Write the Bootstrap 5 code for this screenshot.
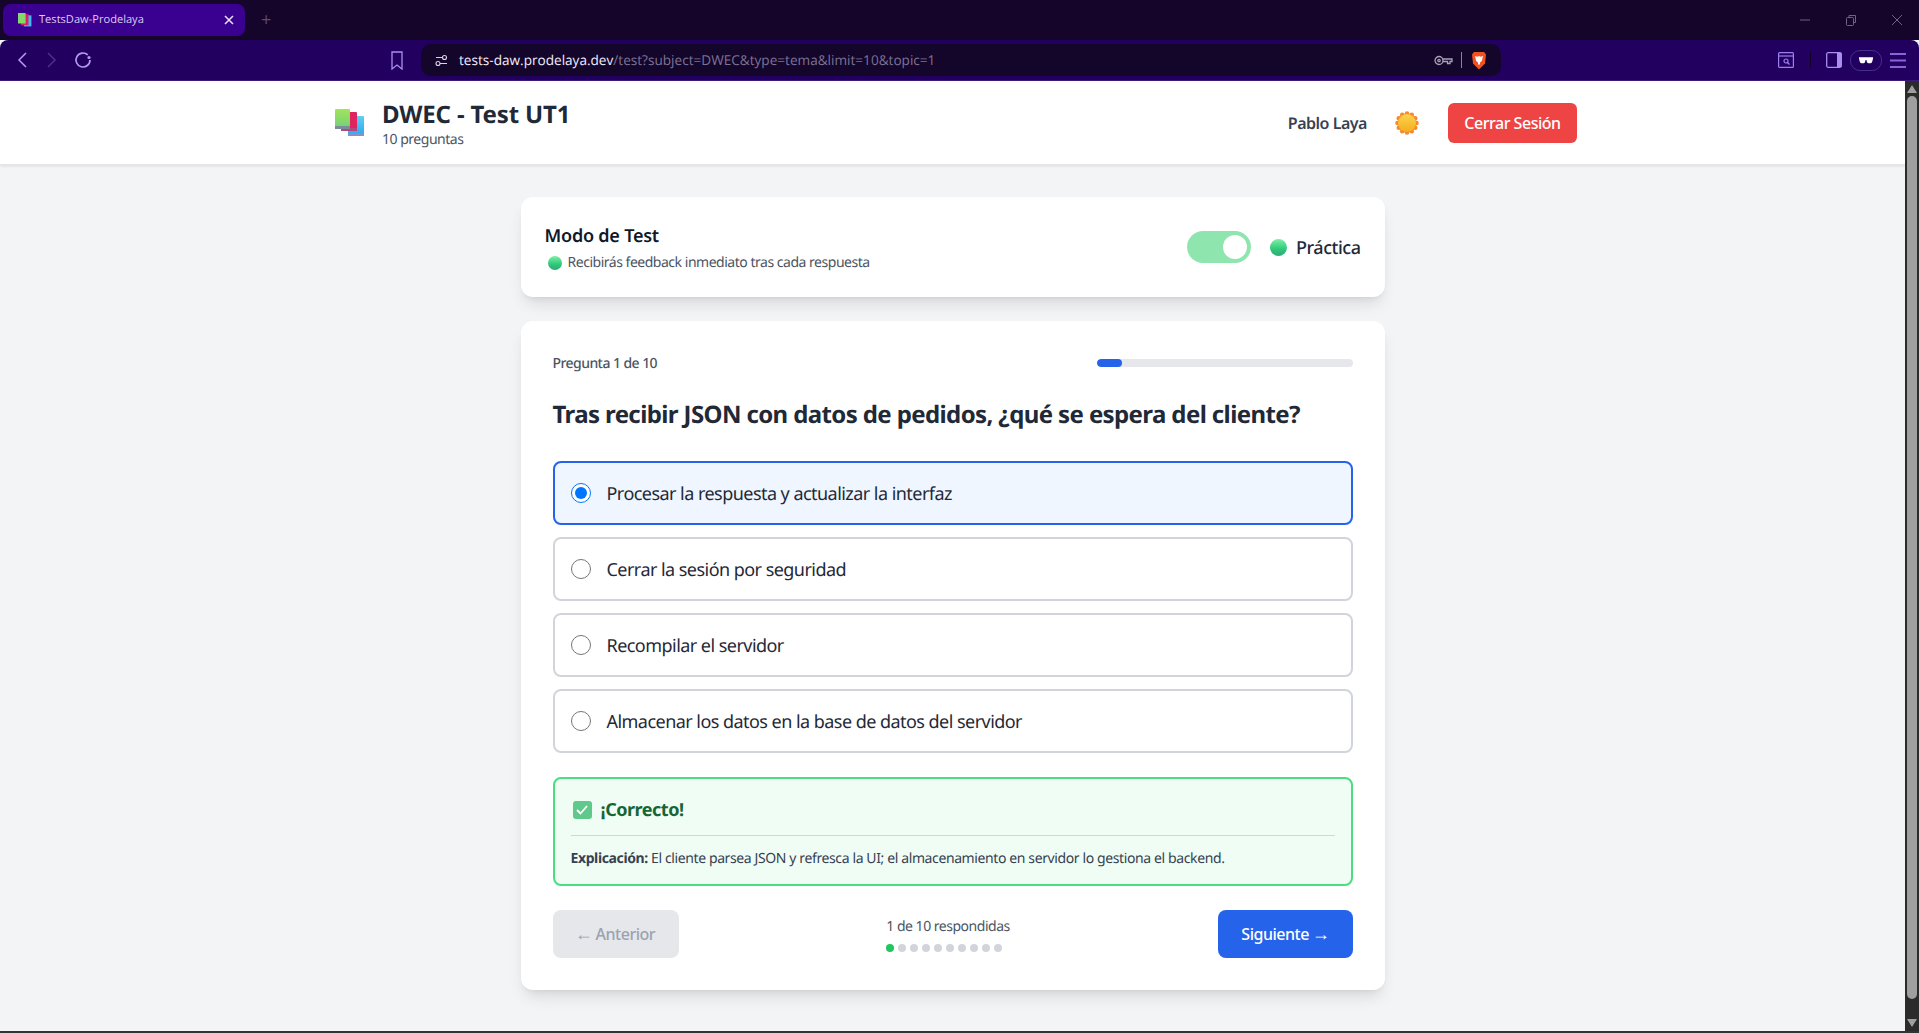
<!DOCTYPE html>
<html lang="es">
<head>
    <meta charset="UTF-8">
    <meta name="viewport" content="width=device-width, initial-scale=1">
    <title>TestsDaw-Prodelaya</title>
    <link rel="stylesheet" href="https://cdn.jsdelivr.net/npm/bootstrap@5.3.0/dist/css/bootstrap.min.css">
    <style>
        html, body { height: 100%; overflow: hidden; }
        body { background-color: #f3f4f6; color: #1f2937; font-family: "Noto Sans", "Open Sans", sans-serif; letter-spacing: -0.03em; text-rendering: geometricPrecision; }
        .app-shell { height: 1033px; }

        /* browser chrome */
        .tab-strip { height: 40px; background-color: #15052b; padding: 4px 3px 4px; font-family: "Open Sans", sans-serif; letter-spacing: 0; }
        .tab-active { width: 242px; height: 32px; background-color: #3a008f; border-radius: 8px; padding: 0 11px 0 15px; color: #d9cdf2; font-size: 11.1px; }
        .tab-fav { margin-right: 7px; }
        .tab-new { color: #5b4a78; font-size: 18px; margin-left: 16px; line-height: 1; }
        .win-btns { gap: 34px; padding-right: 13px; }
        .tool-bar { height: 41px; background-color: #220060; border-bottom: 1px solid #3d1a7a; border-radius: 8px 8px 0 0; padding: 0 13px 0 16px; letter-spacing: 0; }
        .tool-gap { margin-left: 18px; }
        .tool-gap-sm { margin-left: 16px; }
        .url-bar { width: 1080px; height: 32px; background-color: #14052b; border-radius: 10px; margin-left: 18px; padding: 0 14px; font-family: "Open Sans", sans-serif; font-size: 13.6px; }
        .url-text { margin-left: 11px; }
        .url-host { color: #f2eefa; }
        .url-rest { color: #7d7395; }
        .url-sep { width: 1px; height: 16px; background-color: #8b8299; margin: 0 9px 0 8px; }
        .nav-spacer { width: 299px; }
        .glasses-pill { width: 32px; height: 21px; border: 1px solid #43308a; border-radius: 10px; margin: 0 8px; }
        .tool-sep { width: 1px; height: 16px; background-color: #0f0325; margin: 0 15px 0 16px; }

        /* page */
        .page-area { height: 950px; }
        .page-main { flex: 1 1 auto; min-width: 0; }
        .fake-scroll { width: 14px; background-color: #2b2b2b; }
        .fake-thumb { width: 10px; background-color: #9f9f9f; border-radius: 5px; flex: 1 1 auto; margin: 3px auto 20px; }
        .site-head { height: 84px; background-color: #fff; border-bottom: 1px solid #e5e7eb; box-shadow: 0 1px 3px rgba(0,0,0,.1); padding: 0 328px 0 334px; }
        .head-title { font-size: 24px; font-weight: 700; line-height: 32px; color: #1f2937; margin: 4px 0 -1px; letter-spacing: -0.006em; }
        .head-sub { font-size: 14px; line-height: 20px; color: #4b5563; }
        .head-name { font-size: 16px; font-weight: 600; color: #374151; }
        .head-sun { margin: 0 28px 0 27px; }
        .btn-logout { height: 40px; width: 129px; background-color: #ef4444; color: #fff; border: 0; border-radius: 6px; font-size: 16px; font-weight: 500; padding: 0; letter-spacing: inherit; }
        .sheet { width: 864px; margin: 0 auto; }
        .panel-box { background-color: #fff; border: 0; border-radius: 12px; box-shadow: 0 10px 15px -3px rgba(0,0,0,.1), 0 4px 6px -4px rgba(0,0,0,.1); }
        .mode-box { height: 100px; margin-top: 32px; padding: 0 24px; }
        .mode-title { font-size: 18px; font-weight: 600; line-height: 28px; color: #111827; margin: 1px 0 1px; letter-spacing: -0.012em; }
        .mode-sub { font-size: 14px; line-height: 20px; color: #4b5563; margin-top: 3px; }
        .dot-green { width: 14px; height: 14px; border-radius: 50%; background: linear-gradient(#7ef0a8, #2fc878 60%, #30a878); margin-left: 3px; margin-right: 6px; }
        .dot-big { width: 17px; height: 17px; margin: 0 9px 0 0; }
        .mode-toggle { width: 64px; height: 32px; border-radius: 16px; background-color: #8fe5ae; padding: 4px; margin-right: 19px; }
        .mode-knob { width: 24px; height: 24px; border-radius: 50%; background-color: #fff; }
        .mode-label { font-size: 18px; font-weight: 500; color: #1f2937; padding-top: 2px; }
        .quiz-box { height: 669px; margin-top: 24px; padding: 32px; }
        .quiz-count { font-size: 14px; font-weight: 500; line-height: 22px; margin-bottom: -2px; color: #4b5563; letter-spacing: -0.04em; }
        .bar-track { width: 256px; height: 8px; background-color: #e5e7eb; border-radius: 4px; overflow: hidden; }
        .bar-fill { height: 100%; background-color: #2563eb; border-radius: 4px; }
        .quiz-q { font-size: 24px; font-weight: 700; line-height: 34px; color: #1f2937; margin: 25px 0 29px; letter-spacing: -0.0254em; }
        .opt-row { height: 64px; border: 2px solid #d1d5db; border-radius: 8px; padding: 2px 16px 0; font-size: 18px; color: #1f2937; margin-bottom: 12px; letter-spacing: -0.03em; }
        .opt-on { border-color: #2563eb; background-color: #eff6ff; }
        .opt-row input { width: 20px; height: 20px; margin: -2px 16px 0 0; }
        .fb-box { height: 109px; margin-top: 24px; border: 2px solid #4ade80; border-radius: 8px; background-color: #f0fdf4; padding: 15px 16px 0; }
        .fb-head { font-size: 18px; font-weight: 700; color: #166534; line-height: 28px; padding: 2px 0 11px; }
        .fb-check { width: 19px; height: 18px; border-radius: 3px; background-color: #5fc98c; margin: 0 9px 0 2px; }
        .fb-text { font-size: 14px; line-height: 20px; color: #374151; border-top: 1px solid #d1d5db; padding-top: 13px; letter-spacing: -0.0276em; }
        .quiz-nav { margin-top: 24px; }
        .btn-prev, .btn-next { height: 48px; border: 0; border-radius: 8px; font-size: 16px; font-weight: 500; padding: 0; letter-spacing: inherit; }
        .btn-prev { width: 126px; background-color: #e5e7eb; color: #9ca3af; }
        .btn-next { width: 135px; background-color: #2563eb; color: #fff; }
        .arrow-glyph { font-family: "Liberation Sans", sans-serif; font-size: 18px; line-height: 1; letter-spacing: 0; margin: 0 -1px; }
        .nav-mid { font-size: 14px; line-height: 20px; color: #4b5563; }
        .dot-row { gap: 4px; margin-top: 7px; }
        .dot-step { width: 8px; height: 8px; border-radius: 50%; background-color: #d1d5db; }
        .dot-now { background-color: #22c55e; }
        .screen-edge { height: 2px; background-color: #333; }
    </style>
</head>
<body>
<div class="app-shell d-flex flex-column">
    <div class="tab-strip d-flex align-items-center">
        <div class="tab-active d-flex align-items-center">
            <svg width="14" height="14" viewBox="0 0 24 24" class="tab-fav"><rect x="10" y="4" width="13" height="19" fill="#38bdf8"/><rect x="5" y="2" width="13" height="19" fill="#e11d63"/><rect x="0" y="0" width="13" height="18" fill="#84d96a"/></svg>
            <span class="flex-grow-1">TestsDaw-Prodelaya</span>
            <svg width="10" height="10" viewBox="0 0 10 10"><path d="M1 1l8 8M9 1l-8 8" stroke="#e6def5" stroke-width="1.6"/></svg>
        </div>
        <span class="tab-new">+</span>
        <div class="win-btns d-flex align-items-center ms-auto">
            <svg width="12" height="12" viewBox="0 0 12 12"><path d="M1 6h10" stroke="#6d6480" stroke-width="1"/></svg>
            <svg width="12" height="12" viewBox="0 0 12 12" fill="none" stroke="#6d6480"><rect x="1.5" y="3.5" width="7" height="8" rx="1"/><path d="M4 3V1.5h6.500v7H9"/></svg>
            <svg width="12" height="12" viewBox="0 0 12 12"><path d="M1 1l10 10M11 1L1 11" stroke="#6d6480" stroke-width="1"/></svg>
        </div>
    </div>
    <div class="tool-bar d-flex align-items-center">
        <svg width="12" height="18" viewBox="0 0 12 18" fill="none" stroke="#b39cf0" stroke-width="1.500"><path d="M10 2L3 9l7 7"/></svg>
        <svg class="tool-gap" width="12" height="18" viewBox="0 0 12 18" fill="none" stroke="#4a2f8c" stroke-width="1.500"><path d="M2 2l7 7-7 7"/></svg>
        <svg class="tool-gap-sm" width="18" height="18" viewBox="0 0 18 18" fill="none" stroke="#b39cf0" stroke-width="1.700"><path d="M16 9a7 7 0 1 1-2.200-5.100"/><circle cx="15" cy="6.500" r="1.600" fill="#b39cf0" stroke="none"/></svg>
        <div class="nav-spacer"></div>
        <svg width="12" height="19" viewBox="0 0 12 19" fill="none" stroke="#a98ff0" stroke-width="1.300"><path d="M1 1h10v17l-5-4-5 4z"/></svg>
        <div class="url-bar d-flex align-items-center">
            <svg width="13" height="13" viewBox="0 0 13 13" fill="none" stroke="#d8d2e4" stroke-width="1.100"><path d="M1 3.500h6M5 9.500h7"/><circle cx="9.500" cy="3.500" r="2"/><circle cx="3" cy="9.500" r="2"/></svg>
            <span class="url-text flex-grow-1"><span class="url-host">tests-daw.prodelaya.dev</span><span class="url-rest">/test?subject=DWEC&amp;type=tema&amp;limit=10&amp;topic=1</span></span>
            <svg width="19" height="11" viewBox="0 0 19 11" fill="none" stroke="#a7a1b3" stroke-width="1.300"><circle cx="5" cy="5.500" r="4"/><circle cx="5" cy="5.500" r="1.200"/><path d="M9 4h9v2.500h-2v2h-2.500v-2H9"/></svg>
            <div class="url-sep"></div>
            <svg width="16" height="19" viewBox="0 0 16 19"><path d="M3 1h10l2 2.500-1 9-6 6-6-6-1-9z" fill="#f4511e"/><path d="M4 5l2.500.800L8 5l1.500.800L12 5l-1.200 5L9 11.500v2H7v-2L5.200 10z" fill="#fff"/></svg>
        </div>
        <div class="d-flex align-items-center ms-auto">
            <svg width="16" height="16" viewBox="0 0 16 16" fill="none" stroke="#9d7ff0" stroke-width="1.200"><rect x=".6" y=".6" width="14.800" height="14.800" rx="1"/><path d="M1 4h14"/><circle cx="8" cy="9" r="2"/><path d="M9.500 10.500l2 2"/></svg>
            <div class="tool-sep"></div>
            <svg width="16" height="16" viewBox="0 0 16 16"><rect x=".7" y=".7" width="14.600" height="14.600" rx="1.500" fill="none" stroke="#a98ff0" stroke-width="1.300"/><rect x="11" y="1" width="4.500" height="14" fill="#a98ff0"/></svg>
            <div class="glasses-pill d-flex align-items-center justify-content-center">
                <svg width="14" height="7" viewBox="0 0 15 7"><path d="M0 0h15v1.500l-1 3.500q-.5 1.500-2 1.500h-1.500q-1.500 0-2-1.500L8 3H7l-.5 2q-.5 1.500-2 1.500H3Q1.500 6.500 1 5L0 1.500z" fill="#fff"/></svg>
            </div>
            <svg width="16" height="15" viewBox="0 0 16 15" fill="#8a63dc"><rect width="16" height="2"/><rect y="6.500" width="16" height="2"/><rect y="13" width="16" height="2"/></svg>
        </div>
    </div>

    <div class="page-area d-flex">
        <div class="page-main">
            <header class="site-head d-flex align-items-center justify-content-between">
                <div class="d-flex align-items-center">
                    <svg width="32" height="32" viewBox="0 0 32 32" class="me-3">
                        <defs>
                            <linearGradient id="bookGreen" x1="0" y1="0" x2="0" y2="1"><stop offset="0" stop-color="#a3e45a"/><stop offset="1" stop-color="#6fcf7a"/></linearGradient>
                            <linearGradient id="bookBlue" x1="0" y1="0" x2="0" y2="1"><stop offset="0" stop-color="#5fd0f5"/><stop offset="1" stop-color="#2fa4f0"/></linearGradient>
                        </defs>
                        <rect x="14" y="9" width="16" height="20" rx="1" fill="url(#bookBlue)"/><rect x="14" y="26" width="16" height="3" fill="#8a8fc9"/>
                        <rect x="7" y="5" width="16" height="19" rx="1" fill="#e0245e"/><rect x="7" y="21" width="16" height="3" fill="#b04a7e"/>
                        <rect x="1" y="2" width="15" height="20" rx="1" fill="url(#bookGreen)"/><rect x="1" y="19" width="15" height="3" fill="#7d8a9c"/>
                    </svg>
                    <div>
                        <h1 class="head-title">DWEC - Test UT1</h1>
                        <div class="head-sub">10 preguntas</div>
                    </div>
                </div>
                <div class="d-flex align-items-center">
                    <span class="head-name">Pablo Laya</span>
                    <svg class="head-sun" width="26" height="26" viewBox="0 0 26 26">
                        <defs><linearGradient id="sunFill" x1="0" y1="0" x2="0" y2="1"><stop offset="0" stop-color="#fcd34d"/><stop offset="1" stop-color="#f5ae1e"/></linearGradient></defs>
                        <g fill="#f58a2e"><circle cx="22.500" cy="13" r="2.300"/><circle cx="21.200" cy="17.750" r="2.300"/><circle cx="17.750" cy="21.200" r="2.300"/><circle cx="13" cy="22.500" r="2.300"/><circle cx="8.250" cy="21.200" r="2.300"/><circle cx="4.800" cy="17.750" r="2.300"/><circle cx="3.500" cy="13" r="2.300"/><circle cx="4.800" cy="8.250" r="2.300"/><circle cx="8.250" cy="4.800" r="2.300"/><circle cx="13" cy="3.500" r="2.300"/><circle cx="17.750" cy="4.800" r="2.300"/><circle cx="21.200" cy="8.250" r="2.300"/><circle cx="13" cy="13" r="9.500"/></g>
                        <circle cx="13" cy="13" r="9" fill="url(#sunFill)"/>
                    </svg>
                    <button class="btn btn-logout" type="button">Cerrar Sesión</button>
                </div>
            </header>

            <div class="sheet">
                <div class="card panel-box mode-box flex-row align-items-center justify-content-between">
                    <div>
                        <h2 class="mode-title">Modo de Test</h2>
                        <div class="mode-sub d-flex align-items-center"><span class="dot-green"></span>Recibirás feedback inmediato tras cada respuesta</div>
                    </div>
                    <div class="d-flex align-items-center">
                        <div class="mode-toggle d-flex justify-content-end"><div class="mode-knob"></div></div>
                        <span class="dot-green dot-big"></span>
                        <span class="mode-label">Práctica</span>
                    </div>
                </div>

                <div class="card panel-box quiz-box">
                    <div class="d-flex align-items-center justify-content-between">
                        <span class="quiz-count">Pregunta 1 de 10</span>
                        <div class="bar-track"><div class="bar-fill" style="width: 10%"></div></div>
                    </div>
                    <h3 class="quiz-q">Tras recibir JSON con datos de pedidos, ¿qué se espera del cliente?</h3>
                    <label class="opt-row opt-on d-flex align-items-center"><input type="radio" name="opt" checked>Procesar la respuesta y actualizar la interfaz</label>
                    <label class="opt-row d-flex align-items-center"><input type="radio" name="opt">Cerrar la sesión por seguridad</label>
                    <label class="opt-row d-flex align-items-center"><input type="radio" name="opt">Recompilar el servidor</label>
                    <label class="opt-row d-flex align-items-center mb-0"><input type="radio" name="opt">Almacenar los datos en la base de datos del servidor</label>

                    <div class="fb-box">
                        <div class="fb-head d-flex align-items-center">
                            <span class="fb-check d-flex align-items-center justify-content-center">
                                <svg width="12" height="10" viewBox="0 0 12 10" fill="none" stroke="#fff" stroke-width="1.800"><path d="M1 5l3.500 3.500L11 1"/></svg>
                            </span>¡Correcto!
                        </div>
                        <div class="fb-text"><strong>Explicación:</strong> El cliente parsea JSON y refresca la UI; el almacenamiento en servidor lo gestiona el backend.</div>
                    </div>

                    <div class="quiz-nav d-flex align-items-center justify-content-between">
                        <button class="btn btn-prev" type="button"><span class="arrow-glyph">←</span> Anterior</button>
                        <div class="nav-mid">
                            <div>1 de 10 respondidas</div>
                            <div class="dot-row d-flex">
                                <span class="dot-step dot-now"></span><span class="dot-step"></span><span class="dot-step"></span><span class="dot-step"></span><span class="dot-step"></span><span class="dot-step"></span><span class="dot-step"></span><span class="dot-step"></span><span class="dot-step"></span><span class="dot-step"></span>
                            </div>
                        </div>
                        <button class="btn btn-next" type="button">Siguiente <span class="arrow-glyph">→</span></button>
                    </div>
                </div>
            </div>
        </div>
        <div class="fake-scroll d-flex flex-column align-items-center">
            <svg class="mt-1" width="10" height="8" viewBox="0 0 10 8"><path d="M5 0l5 8H0z" fill="#9f9f9f"/></svg>
            <div class="fake-thumb"></div>
            <svg class="mb-1" width="10" height="8" viewBox="0 0 10 8"><path d="M5 8L0 0h10z" fill="#9f9f9f"/></svg>
        </div>
    </div>
    <div class="screen-edge"></div>
</div>
<script src="https://cdn.jsdelivr.net/npm/bootstrap@5.3.0/dist/js/bootstrap.bundle.min.js"></script>
</body>
</html>
